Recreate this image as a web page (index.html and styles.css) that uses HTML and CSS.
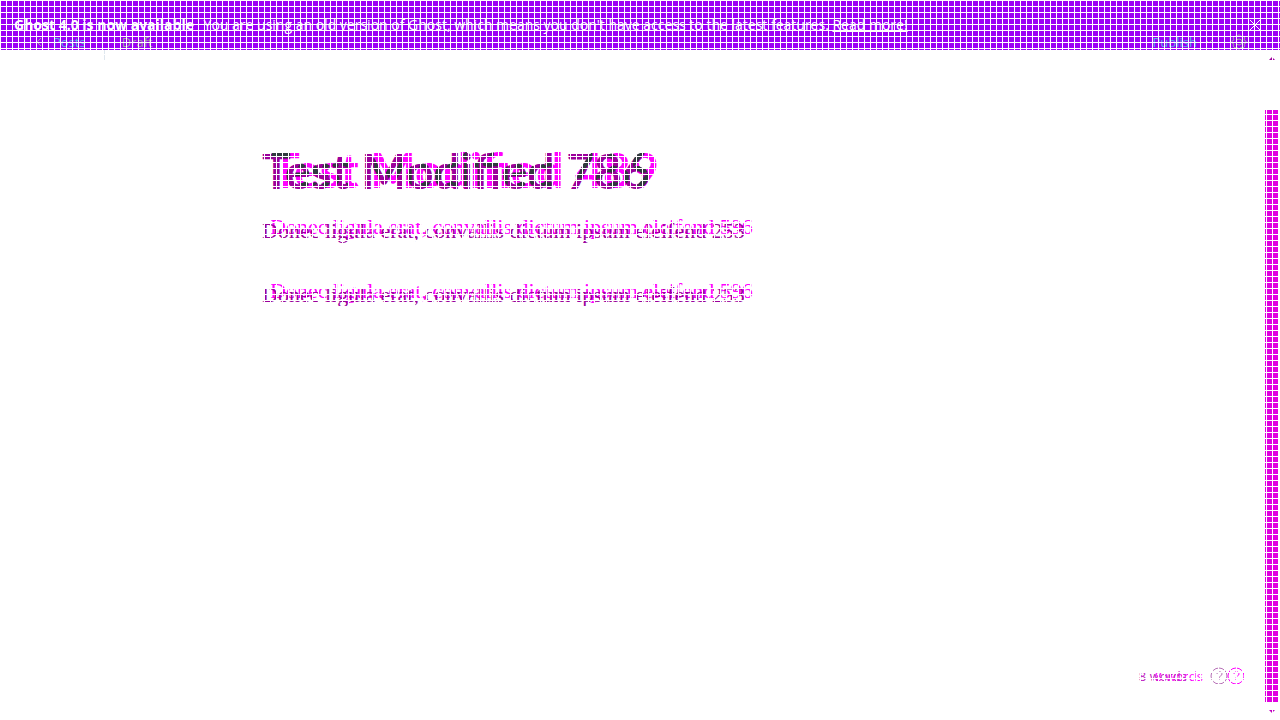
FILE: index.html
```
<!DOCTYPE html>
<html lang="en">
<head>
<meta charset="utf-8">
<title>Editor comparison</title>
<link rel="stylesheet" href="styles.css">
</head>
<body>
<header class="banner">
  <div class="notice">
    <p><strong>Ghost 4.0 is now available</strong> <span class="message">You are using an old version of Ghost, which means you don't have access to the latest features. <a href="#">Read more!</a></span></p>
    <button class="close" aria-label="Close"><svg width="12" height="12" viewBox="0 0 12 12"><path d="M1 1L11 11M11 1L1 11"/></svg></button>
  </div>
  <nav class="toolbar">
    <a class="back" href="#"><svg width="6" height="10" viewBox="0 0 6 10"><path d="M5 1L1 5L5 9"/></svg>Posts</a>
    <span class="status">Draft</span>
    <button class="publish">Publish<svg width="8" height="6" viewBox="0 0 8 6"><path d="M1 1L4 4L7 1"/></svg></button>
    <button class="settings" aria-label="Settings"><svg width="16" height="16" viewBox="0 0 16 16"><circle cx="8" cy="8" r="3"/><path d="M7 1h2l1 2 2-1 2 2-1 2 2 1v2l-2 1 1 2-2 2-2-1-1 2H7l-1-2-2 1-2-2 1-2-2-1V7l2-1-1-2 2-2 2 1z"/></svg></button>
  </nav>
</header>
<span class="divider"></span>
<main class="editor">
  <h1 class="pair"><span class="before">Test Modified 786</span><span class="after" aria-hidden="true">Test Modified 489</span><svg class="overlap" width="420" height="60" aria-hidden="true"><clipPath id="shifted"><text x="9" y="46">Test Modified 489</text></clipPath><g clip-path="url(#shifted)"><text x="0" y="47">Test Modified 786</text></g></svg></h1>
  <p class="pair"><span class="before">Donec ligula erat, convallis dictum ipsum eleifend 253</span><span class="after" aria-hidden="true">Donec ligula erat, convallis dictum ipsum eleifend 596</span></p>
  <p class="pair"><span class="before">Donec ligula erat, convallis dictum ipsum eleifend 253</span><span class="after" aria-hidden="true">Donec ligula erat, convallis dictum ipsum eleifend 596</span></p>
</main>
<footer class="footer">
  <span class="pair count"><span class="before">8 words</span><span class="after" aria-hidden="true">8 words</span></span>
  <a class="help" href="#" aria-label="Help"><svg width="34" height="18" viewBox="0 0 34 18"><g class="old"><circle cx="9" cy="9" r="8"/><path d="M7 7c0-3 5-3 5 0 0 2-3 2-3 4M9 12v1"/></g><g class="new"><circle cx="26" cy="9" r="8"/><path d="M24 7c0-3 5-3 5 0 0 2-3 2-3 4M26 12v1"/></g></svg></a>
</footer>
<div class="scrollbar"><i class="up"></i><div class="thumb"></div><i class="down"></i></div>
</body>
</html>
```
FILE: styles.css
```
* { box-sizing: border-box; }
body { margin: 0; min-height: 100vh; display: flex; flex-direction: column; position: relative; background: #fff; font: 14px/20px "Open Sans", sans-serif; }
body::after { content: ""; position: absolute; inset: 0; z-index: 5; pointer-events: none; background: linear-gradient(90deg, #fff 1px, transparent 1px) 0 0 / 6px 6px, linear-gradient(#fff 1px, transparent 1px) 0 0 / 6px 6px; }
p, h1 { margin: 0; }
button { border: 0; padding: 0; background: none; font: inherit; color: inherit; display: flex; align-items: center; }
svg { fill: none; stroke: currentColor; display: block; }
.banner { height: 50px; padding: 15px 19px 0 14px; background: #9b00f5; color: #fff; }
.notice { display: flex; justify-content: space-between; align-items: center; white-space: nowrap; }
.message { margin-left: 6px; }
.message a { color: inherit; }
.toolbar { display: flex; align-items: center; height: 14px; padding: 0 14px 0 22px; font-size: 13px; line-height: 14px; color: #a0a5a0; }
.back { display: flex; align-items: center; gap: 11px; color: #55b5e5; text-decoration: none; }
.back svg { color: #a0a5a0; }
.status { margin-left: 36px; }
.publish { margin-left: auto; gap: 8px; color: #55b5e5; }
.publish svg { color: #a0a5a0; }
.settings { margin-left: 18px; }
.divider { width: 1px; height: 10px; margin-left: 104px; background: #dfe7ee; }
.editor { flex: 1; padding: 81px 262px 0; white-space: nowrap; }
.pair { display: grid; justify-content: start; }
.pair > * { grid-area: 1 / 1; }
.after { color: #f0f; }
.before { color: #9b009b; z-index: 1; }
.editor h1 { font: 700 48px/60px Lato, sans-serif; }
.editor h1 .after { margin: -1px 0 1px 9px; }
.overlap { z-index: 2; fill: #303a3e; stroke: none; }
.editor p { margin-top: 12px; font: 22px/36px "Liberation Serif", serif; }
.editor p + p { margin-top: 28px; }
.editor p .after { margin: -4px 0 4px 8px; }
.footer { display: flex; justify-content: flex-end; align-items: center; gap: 7px; padding: 0 36px 34px; font-size: 13px; line-height: 20px; }
.count .before { color: #c020c0; }
.count .after { margin-left: 16px; }
.help .old { stroke: #b770b7; }
.help .new { stroke: #f0f; }
.scrollbar { position: absolute; right: 2px; top: 57px; bottom: 7px; width: 13px; display: flex; flex-direction: column; align-items: center; }
.thumb { flex: 1; width: 13px; margin: 50px 0 8px; background: #e000e0; }
.up, .down { border: 3px solid transparent; height: 3px; }
.up { border-top: 0; border-bottom-color: #a000a0; }
.down { border-bottom: 0; border-top-color: #c000c0; }
```
